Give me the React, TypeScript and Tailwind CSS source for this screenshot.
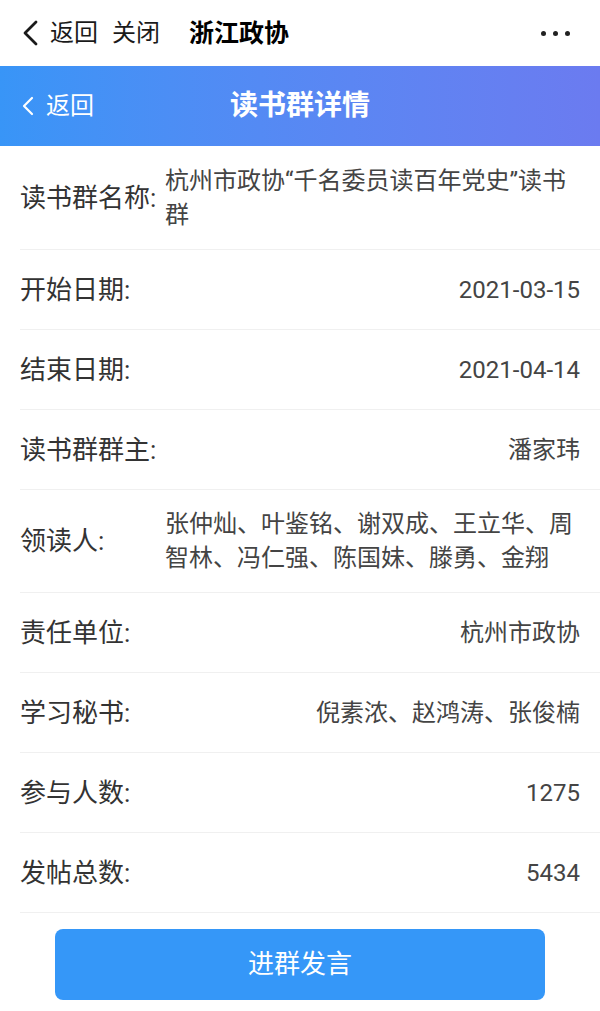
import React from 'react'

const rows = [
  { label: '读书群名称:', value: '杭州市政协“千名委员读百年党史”读书群' },
  { label: '开始日期:', value: '2021-03-15' },
  { label: '结束日期:', value: '2021-04-14' },
  { label: '读书群群主:', value: '潘家玮' },
  { label: '领读人:', value: '张仲灿、叶鉴铭、谢双成、王立华、周智林、冯仁强、陈国妹、滕勇、金翔' },
  { label: '责任单位:', value: '杭州市政协' },
  { label: '学习秘书:', value: '倪素浓、赵鸿涛、张俊楠' },
  { label: '参与人数:', value: '1275' },
  { label: '发帖总数:', value: '5434' },
]

export default function App() {
  return (
    <div className="w-[600px] h-[1011px] bg-white flex flex-col font-[Roboto,'Noto_Sans_CJK_SC',sans-serif]">
      {/* Top bar */}
      <div className="h-[66px] flex items-center px-[20px] text-[#1a1a1a]">
        <svg width="20" height="26" viewBox="0 0 20 26" className="mr-[10px]">
          <path d="M16 2 L5 13 L16 24" fill="none" stroke="#1a1a1a" strokeWidth="2.8" strokeLinecap="round" strokeLinejoin="round" />
        </svg>
        <span className="text-[24px] leading-none">返回</span>
        <span className="text-[24px] leading-none ml-[14px]">关闭</span>
        <span className="text-[25px] leading-none font-bold ml-[29px] text-black">浙江政协</span>
        <div className="ml-auto flex gap-[7px] mr-[10px]">
          <span className="w-[5px] h-[5px] rounded-full bg-[#222]" />
          <span className="w-[5px] h-[5px] rounded-full bg-[#222]" />
          <span className="w-[5px] h-[5px] rounded-full bg-[#222]" />
        </div>
      </div>

      {/* Blue header */}
      <div className="h-[80px] flex items-center bg-gradient-to-r from-[#3895f7] to-[#6b7bf0] text-white">
        <div className="w-[130px] flex items-center pl-[22px]">
          <svg width="12" height="20" viewBox="0 0 12 20" className="mr-[12px]">
            <path d="M10 2 L2 10 L10 18" fill="none" stroke="white" strokeWidth="2.2" strokeLinecap="round" strokeLinejoin="round" />
          </svg>
          <span className="text-[24px] leading-none">返回</span>
        </div>
        <div className="flex-1 text-center text-[28px] font-bold leading-none">读书群详情</div>
        <div className="w-[130px]" />
      </div>

      {/* Detail rows */}
      <div className="flex flex-col">
        {rows.map((r, i) => (
          <div
            key={r.label}
            className={
              i === 0
                ? 'ml-[20px] pr-[20px] min-h-[80px] pt-[18px] pb-[17px] flex items-center border-b border-[#f0f0f0]'
                : 'ml-[20px] pr-[20px] min-h-[80px] py-[17px] flex items-center border-b border-[#f0f0f0]'
            }
          >
            <div className="w-[145px] shrink-0 whitespace-nowrap text-[26px] leading-[34px] text-[#333]">{r.label}</div>
            <div className="ml-auto min-w-0 text-left text-[24px] leading-[34px] text-[#444]">{r.value}</div>
          </div>
        ))}
      </div>

      {/* Button */}
      <div className="flex justify-center pt-[16px]">
        <button className="w-[490px] h-[71px] rounded-[8px] bg-[#3597f8] text-white text-[26px]">进群发言</button>
      </div>
    </div>
  )
}
